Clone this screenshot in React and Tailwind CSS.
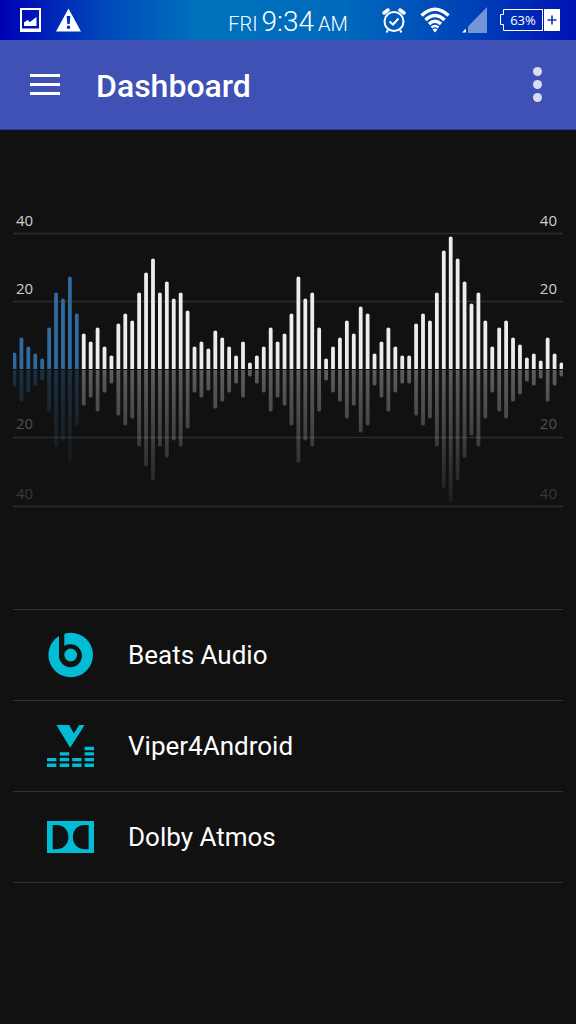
const levels = [
  17, 32, 23, 16, 11, 42, 77, 71, 93, 56, 36, 28, 42, 23, 14, 46, 56, 49, 77, 97,
  111, 77, 88, 71, 77, 59, 23, 28, 21, 39, 32, 23, 14, 28, 7, 14, 23, 42, 28, 36,
  56, 93, 71, 77, 42, 11, 23, 32, 49, 36, 63, 56, 16, 28, 42, 23, 14, 14, 46, 56,
  49, 77, 119, 133, 111, 88, 66, 77, 49, 23, 42, 49, 32, 25, 12, 16, 9, 32, 16, 7,
];

const gridLines = [28, 96, 232, 301];

const labels = [
  { text: "40", y: 21, fill: "#cfcfcf" },
  { text: "20", y: 89, fill: "#cfcfcf" },
  { text: "20", y: 224, fill: "#505050" },
  { text: "40", y: 294, fill: "#383838" },
];

const PLAYED = 10;
const BASE = 164;

const StatusBar = () => {
  return (
    <div className="grid h-10 grid-cols-[1fr_auto_1fr] items-center bg-[linear-gradient(90deg,#0000b4_0%,#0048ba_18%,#0072bc_34%,#006abc_60%,#0040b8_82%,#0012b4_100%)] pl-5 pr-4 text-white">
      <div className="flex items-center gap-[15px]">
        <svg className="h-6 w-[21px]" viewBox="0 0 21 24" fill="currentColor">
          <path fillRule="evenodd" d="M0 0H21V24H0ZM2 2V20.500H19V2Z" />
          <path d="M4 18V14.500L7.500 12L10 14L16.500 9V18Z" />
        </svg>
        <svg className="h-6 w-[25px]" viewBox="0 0 25 24" fill="currentColor">
          <path fillRule="evenodd" d="M12.500 0.500L25 23.500H0ZM10.700 8L11.300 16H13.700L14.300 8ZM12.500 17.500A1.800 1.800 0 1 0 12.500 21.100A1.800 1.800 0 1 0 12.500 17.500Z" />
        </svg>
      </div>

      <div className="flex items-baseline gap-1 pr-1 pt-1 font-light">
        <span className="text-xl">FRI</span>
        <span className="text-[28px] leading-9">9:34</span>
        <span className="text-xl">AM</span>
      </div>

      <div className="flex items-center justify-end gap-3">
        <svg className="mr-0.5 h-[25px] w-6" viewBox="0 0 24 25" fill="none" stroke="currentColor">
          <circle cx="12" cy="13.500" r="9.500" strokeWidth="2" />
          <path d="M7.500 13.500L11 16.500L16.500 10.500" strokeWidth="2" />
          <path d="M2 5L6 2M22 5L18 2" strokeWidth="3.500" strokeLinecap="round" />
          <path d="M6 22L4.500 24.500M18 22L19.500 24.500" strokeWidth="2" />
        </svg>
        <svg className="h-[26px] w-[30px]" viewBox="0 0 30 26" fill="none" stroke="currentColor" strokeWidth="3.500">
          <path d="M1.500 8.500Q15 -4 28.500 8.500" />
          <path d="M5.500 13Q15 4 24.500 13" />
          <path d="M9 17Q15 11.500 21 17" />
          <path d="M11.500 20.500Q15 17.500 18.500 20.500" strokeWidth="2.500" />
          <path d="M12.500 22.500Q15 20.500 17.500 22.500L15 25.500Z" fill="currentColor" stroke="none" />
        </svg>
        <svg className="h-[26px] w-[25px]" viewBox="0 0 25 26" fill="currentColor">
          <path d="M0 25.500L4 21.500V25.500Z" />
          <path d="M6 19.500L25 0V26H6Z" opacity="0.45" />
        </svg>
        <div className="flex h-[22px] items-center">
          <svg className="h-[22px] w-[5px]" viewBox="0 0 5 22" fill="none" stroke="currentColor">
            <path d="M5 0.500H4.500V5.500H1.500V15.500H4.500V21.500H5" />
          </svg>
          <span className="flex h-full w-[39px] items-center justify-center border-y border-r font-['Open_Sans',sans-serif] text-[13px] leading-none">63%</span>
          <svg className="ml-px h-full w-4" viewBox="0 0 16 22">
            <path d="M0 0H16V22H0Z" fill="currentColor" />
            <path d="M8 6.500V15.500M3.500 11H12.500" stroke="#1a2fae" strokeWidth="1.600" />
          </svg>
        </div>
      </div>
    </div>
  );
};

const AppBar = () => {
  return (
    <header className="flex h-[90px] items-center border-b border-[#2b3a8c] bg-[#3f51b5] pl-[30px] pr-[34px] text-white">
      <button aria-label="Open menu" className="flex w-[30px] flex-col gap-[6px]">
        <span className="h-[3px] bg-white" />
        <span className="h-[3px] bg-white" />
        <span className="h-[3px] bg-white" />
      </button>
      <h1 className="ml-9 flex-1 pt-0.5 text-[32px] font-medium">Dashboard</h1>
      <button aria-label="More options" className="flex flex-col gap-1">
        <span className="size-[9px] rounded-full bg-white/80" />
        <span className="size-[9px] rounded-full bg-white/80" />
        <span className="size-[9px] rounded-full bg-white/80" />
      </button>
    </header>
  );
};

const Waveform = () => {
  return (
    <svg className="block w-full font-['Open_Sans',sans-serif]" viewBox="0 0 550 310" role="img" aria-label="Audio level">
      <defs>
        <linearGradient id="fadeWhite" gradientUnits="userSpaceOnUse" x1="0" y1="165" x2="0" y2="302">
          <stop offset="0" stopColor="#ffffff" stopOpacity="0.32" />
          <stop offset="0.4" stopColor="#ffffff" stopOpacity="0.22" />
          <stop offset="1" stopColor="#ffffff" stopOpacity="0.04" />
        </linearGradient>
        <linearGradient id="fadeBlue" gradientUnits="userSpaceOnUse" x1="0" y1="165" x2="0" y2="265">
          <stop offset="0" stopColor="#2f74b0" stopOpacity="0.32" />
          <stop offset="1" stopColor="#2f74b0" stopOpacity="0.06" />
        </linearGradient>
      </defs>

      {gridLines.map((y) => (
        <path key={y} d={`M0 ${y + 0.5}H550`} stroke="#2d2d2d" strokeWidth="1.500" />
      ))}

      {levels.map((level, i) => {
        const x = i * 6.924 - 0.4;
        const played = i < PLAYED;
        return (
          <g key={i}>
            <path
              d={`M${x} ${BASE}V${BASE - level + 2}q0 -1.500 1.900 -1.500t1.900 1.500V${BASE}Z`}
              fill={played ? "#2f6a9f" : "#ececec"}
            />
            <path
              d={`M${x} ${BASE + 1}V${BASE + level - 1}q0 1.500 1.900 1.500t1.900 -1.500V${BASE + 1}Z`}
              fill={played ? "url(#fadeBlue)" : "url(#fadeWhite)"}
            />
          </g>
        );
      })}

      {labels.map(({ text, y, fill }) => (
        <g key={y} fill={fill} fontSize="15" fontWeight="500">
          <text x="3" y={y}>{text}</text>
          <text x="544" y={y} textAnchor="end">{text}</text>
        </g>
      ))}
    </svg>
  );
};

const BeatsIcon = () => (
  <svg className="w-[47px]" viewBox="0 0 47 46">
    <circle cx="23.700" cy="23" r="22.300" fill="#00bcd4" />
    <path d="M12 0H17.300V14A11.500 11.500 0 1 1 12 23Z" fill="#111111" />
    <circle cx="23.700" cy="23" r="6.400" fill="#00bcd4" />
  </svg>
);

const ViperIcon = () => (
  <svg className="w-[47px]" viewBox="0 0 140 126" fill="#00bcd4">
    <path d="M28 0H66L80 25L96 0H112L69 68Z" />
    <path d="M0 115H28V125H0ZM0 98H28V108H0Z" />
    <path d="M38 115H66V125H38ZM38 98H66V108H38ZM38 81H66V91H38Z" />
    <path d="M75 115H103V125H75ZM75 98H103V108H75Z" />
    <path d="M112 115H140V125H112ZM112 98H140V108H112ZM112 81H140V91H112ZM112 65H140V75H112Z" />
  </svg>
);

const DolbyIcon = () => (
  <svg className="w-[47px]" viewBox="0 0 140 97" fill="#00bcd4">
    <path
      fillRule="evenodd"
      d="M0 0H140V97H0ZM17 12V84H30C50 84 64 68 64 48S50 12 30 12ZM124 12H111C91 12 77 28 77 48S91 84 111 84H124Z"
    />
  </svg>
);

const effects = [
  { name: "Beats Audio", Icon: BeatsIcon },
  { name: "Viper4Android", Icon: ViperIcon },
  { name: "Dolby Atmos", Icon: DolbyIcon },
];

const App = () => {
  return (
    <div className="min-h-screen bg-[#111111] font-[Roboto,sans-serif]">
      <StatusBar />
      <AppBar />
      <main className="px-[13px] pt-[75px]">
        <Waveform />
        <ul className="mt-[94px] border-t border-[#303030]">
          {effects.map(({ name, Icon }) => (
            <li key={name} className="border-b border-[#303030]">
              <button className="flex h-[90px] w-full items-center gap-[34px] pl-[34px] text-left text-[26px] text-white">
                <Icon />
                {name}
              </button>
            </li>
          ))}
        </ul>
      </main>
    </div>
  );
};

export default App;
